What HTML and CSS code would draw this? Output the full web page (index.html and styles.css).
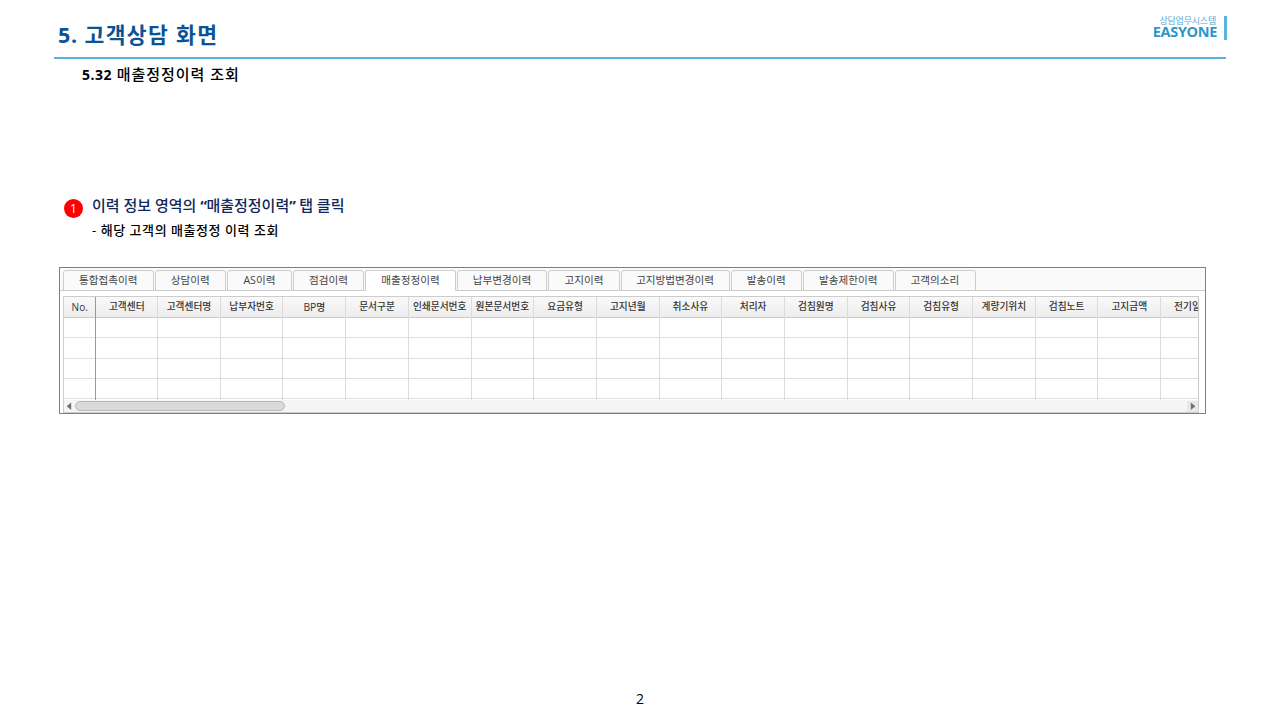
FILE: index.html
```html
<!DOCTYPE html>
<html lang="ko">
<head>
<meta charset="utf-8">
<title>고객상담 화면</title>
<link rel="stylesheet" href="styles.css">
</head>
<body>
<main class="slide">
  <header class="header">
    <h1 class="title"><span class="title-num">5.</span> 고객상담 화면</h1>
    <div class="brand">
      <div class="brand-text"><div class="brand-sub">상담업무시스템</div><div class="brand-name">EASYONE</div></div>
      <div class="brand-bar"></div>
    </div>
  </header>
  <h2 class="subtitle"><span class="subtitle-num">5.32</span> 매출정정이력 조회</h2>
  <section class="step">
    <div class="badge">1</div>
    <div>
      <p class="step-title">이력 정보 영역의 <b>“</b>매출정정이력<b>”</b> 탭 클릭</p>
      <p class="step-note">- 해당 고객의 매출정정 이력 조회</p>
    </div>
  </section>
  <section class="panel">
    <nav class="tabs">
      <div class="tab w91">통합접촉이력</div>
      <div class="tab w71">상담이력</div>
      <div class="tab w65">AS이력</div>
      <div class="tab w71">점검이력</div>
      <div class="tab w91 active">매출정정이력</div>
      <div class="tab w91">납부변경이력</div>
      <div class="tab w71">고지이력</div>
      <div class="tab w109">고지방법변경이력</div>
      <div class="tab w71">발송이력</div>
      <div class="tab w91">발송제한이력</div>
      <div class="tab w81">고객의소리</div>
    </nav>
    <div class="grid">
      <div class="cols">
        <div class="col col-no"><div class="th th-no">No.</div></div>
        <div class="col col-first"><div class="th">고객센터</div></div>
        <div class="col"><div class="th">고객센터명</div></div>
        <div class="col"><div class="th">납부자번호</div></div>
        <div class="col"><div class="th"><span class="latin">BP</span>명</div></div>
        <div class="col"><div class="th">문서구분</div></div>
        <div class="col"><div class="th">인쇄문서번호</div></div>
        <div class="col"><div class="th">원본문서번호</div></div>
        <div class="col"><div class="th">요금유형</div></div>
        <div class="col"><div class="th">고지년월</div></div>
        <div class="col"><div class="th">취소사유</div></div>
        <div class="col"><div class="th">처리자</div></div>
        <div class="col"><div class="th">검침원명</div></div>
        <div class="col"><div class="th">검침사유</div></div>
        <div class="col"><div class="th">검침유형</div></div>
        <div class="col"><div class="th">계량기위치</div></div>
        <div class="col"><div class="th">검침노트</div></div>
        <div class="col"><div class="th">고지금액</div></div>
        <div class="col"><div class="th">전기일자</div></div>
      </div>
      <div class="scroll">
        <svg class="arrow" viewBox="0 0 11 11"><path d="M7.2 1.5v7.5L2.7 5.2z"/></svg>
        <div class="thumb"></div>
        <svg class="arrow arrow-right" viewBox="0 0 11 11"><path d="M3.8 1.5v7.5L8.3 5.2z"/></svg>
      </div>
    </div>
  </section>
  <footer class="page">2</footer>
</main>
</body>
</html>
```
FILE: styles.css
```css
* { box-sizing: border-box; }
body { margin: 0; background: #fff; font-family: "Open Sans", "Noto Sans CJK KR", sans-serif; }
h1, h2, p { margin: 0; }
.slide { width: 1280px; height: 720px; overflow: hidden; display: flex; flex-direction: column; white-space: nowrap; }
.header { height: 59px; flex: none; margin: 0 54px; border-bottom: 2px solid #5bb3dc; display: flex; justify-content: space-between; }
.title { padding: 19px 0 0 4px; font-size: 21.5px; line-height: 32px; font-weight: 700; color: #0b5394; letter-spacing: 1.35px; }
.title-num { letter-spacing: 0.6px; }
.brand { display: flex; gap: 7px; padding-top: 16px; color: #2e96c8; text-align: right; }
.brand-sub { font-size: 9px; line-height: 10px; letter-spacing: -0.2px; color: #5aa9d0; padding-right: 1px; }
.brand-name { font-size: 14.5px; line-height: 12px; font-weight: 700; letter-spacing: -0.35px; }
.brand-bar { width: 3px; height: 24px; background: #5bb3dc; margin-right: -1px; }
.subtitle { padding-left: 82px; margin-top: 3px; height: 25px; font-size: 15px; line-height: 24px; font-weight: 500; color: #000; letter-spacing: 0.95px; }
.subtitle-num { font-size: 14px; font-weight: 700; letter-spacing: 0.5px; }
.step { display: flex; gap: 9px; margin: 107px 0 0 64px; height: 73px; }
.badge { width: 19px; height: 19px; margin-top: 5px; border-radius: 50%; background: #f00; color: #fff; font-size: 12px; line-height: 19px; text-align: center; }
.step-title { font-size: 15px; line-height: 23px; font-weight: 500; color: #12275a; }
.step-title b { letter-spacing: -0.6px; }
.step-note { font-size: 13px; line-height: 26px; font-weight: 500; color: #000; letter-spacing: 0.55px; }
.panel { width: 1147px; height: 147px; margin-left: 59px; border: 1px solid #7f7f7f; flex: none; background: #fff; }
.tabs { height: 23px; padding: 2px 0 0 3px; display: flex; gap: 1px; background: #fafafa; border-bottom: 1px solid #ccc; }
.tab { height: 21px; flex: none; border: 1px solid #ccc; border-radius: 3px 3px 0 0; background: #fafafa; color: #444; font-size: 10.6px; line-height: 19px; text-align: center; }
.active { background: #fff; border-bottom-color: #fff; }
.w65 { width: 65px; }
.w71 { width: 71.2px; }
.w81 { width: 81px; }
.w91 { width: 90.7px; }
.w109 { width: 109px; }
.grid { width: 1136px; height: 117px; margin: 5px 0 0 3px; border: 1px solid #ccc; overflow: hidden; }
.cols { display: flex; height: 103px; overflow: hidden; }
.col { width: 62.7px; height: 103px; flex: none; border-right: 1px solid #dcdcdc; background: repeating-linear-gradient(#fff 0 19.3px, #dedede 19.3px 20.3px) 0 21px no-repeat; }
.col-no { width: 32.4px; border-right-color: #999; }
.col-first { width: 61.7px; }
.th { height: 21px; border-bottom: 1px solid #ccc; background: linear-gradient(#f9f9f9, #ededed); color: #333; font-size: 9.7px; line-height: 20px; font-weight: 500; text-align: center; }
.latin { font-size: 10.3px; font-weight: 500; }
.th-no { font-size: 10px; }
.scroll { height: 12px; padding-top: 1px; display: flex; background: #f5f5f5; }
.arrow { width: 11px; height: 11px; flex: none; fill: #707070; }
.arrow-right { margin-left: auto; background: #e8e8e8; }
.thumb { width: 210px; height: 10px; border: 1px solid #b8b8b8; border-radius: 5px; background: #dadada; }
.page { margin-top: auto; height: 31px; font-size: 14px; line-height: 20px; text-align: center; color: #000; }
```
